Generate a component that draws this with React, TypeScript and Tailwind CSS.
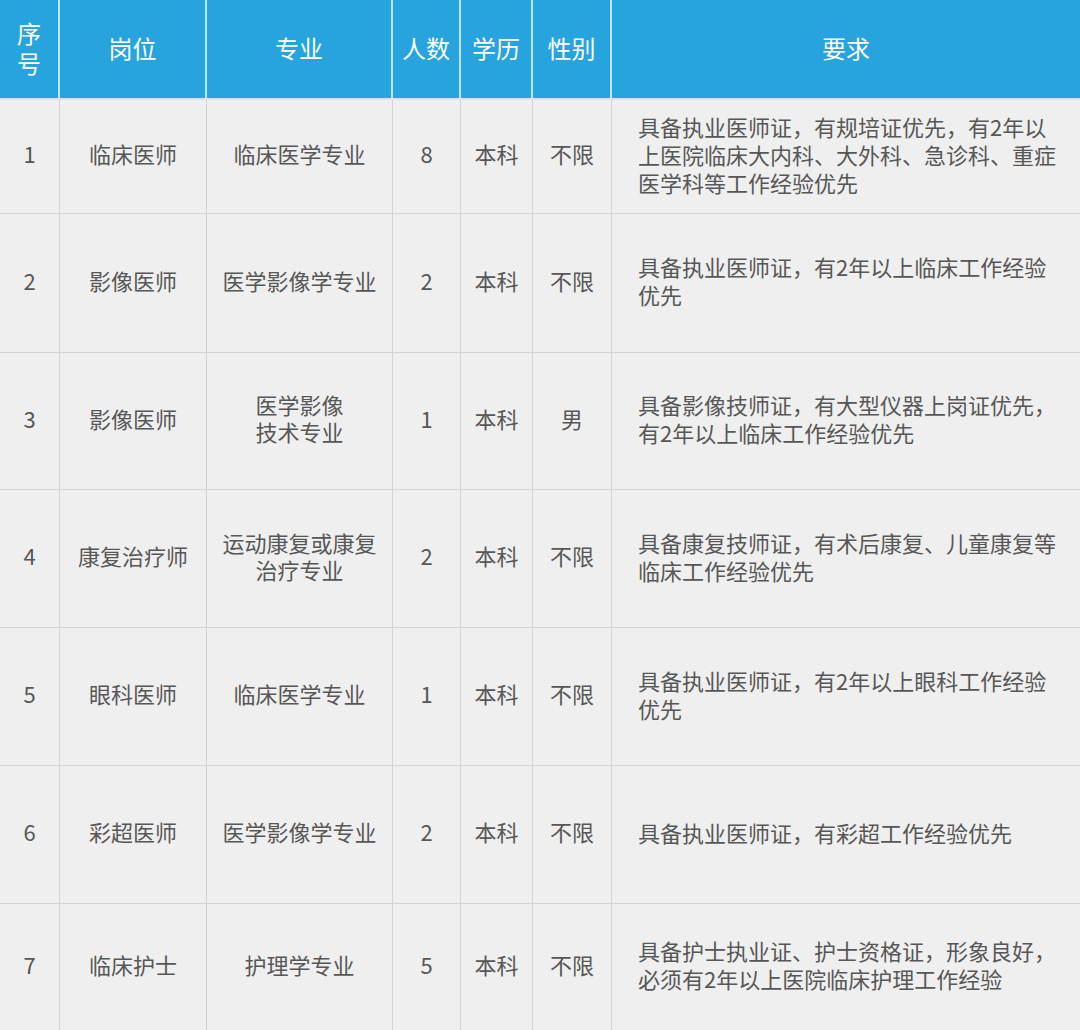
import React from "react";

const colW = [
  "w-[60px]",
  "w-[147px]",
  "w-[186px]",
  "w-[68px]",
  "w-[72px]",
  "w-[79px]",
  "w-[468px]",
];

const rows: { h: string; cells: React.ReactNode[]; req: React.ReactNode }[] = [
  {
    h: "h-[114px] border-b",
    cells: ["1", "临床医师", "临床医学专业", "8", "本科", "不限"],
    req: (
      <>
        具备执业医师证，有规培证优先，有2年以
        <br />
        上医院临床大内科、大外科、急诊科、重症
        <br />
        医学科等工作经验优先
      </>
    ),
  },
  {
    h: "h-[139px] border-b",
    cells: ["2", "影像医师", "医学影像学专业", "2", "本科", "不限"],
    req: (
      <>
        具备执业医师证，有2年以上临床工作经验
        <br />
        优先
      </>
    ),
  },
  {
    h: "h-[137px] border-b",
    cells: [
      "3",
      "影像医师",
      <>
        医学影像
        <br />
        技术专业
      </>,
      "1",
      "本科",
      "男",
    ],
    req: (
      <>
        具备影像技师证，有大型仪器上岗证优先，
        <br />
        有2年以上临床工作经验优先
      </>
    ),
  },
  {
    h: "h-[138px] border-b",
    cells: [
      "4",
      "康复治疗师",
      <>
        运动康复或康复
        <br />
        治疗专业
      </>,
      "2",
      "本科",
      "不限",
    ],
    req: (
      <>
        具备康复技师证，有术后康复、儿童康复等
        <br />
        临床工作经验优先
      </>
    ),
  },
  {
    h: "h-[138px] border-b",
    cells: ["5", "眼科医师", "临床医学专业", "1", "本科", "不限"],
    req: (
      <>
        具备执业医师证，有2年以上眼科工作经验
        <br />
        优先
      </>
    ),
  },
  {
    h: "h-[138px] border-b",
    cells: ["6", "彩超医师", "医学影像学专业", "2", "本科", "不限"],
    req: <>具备执业医师证，有彩超工作经验优先</>,
  },
  {
    h: "h-[126px]",
    cells: ["7", "临床护士", "护理学专业", "5", "本科", "不限"],
    req: (
      <>
        具备护士执业证、护士资格证，形象良好，
        <br />
        必须有2年以上医院临床护理工作经验
      </>
    ),
  },
];

const headers: React.ReactNode[] = [
  <>
    序
    <br />号
  </>,
  "岗位",
  "专业",
  "人数",
  "学历",
  "性别",
  "要求",
];

export default function App() {
  return (
    <div className="w-[1080px] h-[1030px] overflow-hidden bg-[#efefef] font-['Noto_Sans_CJK_SC','Noto_Sans',sans-serif]">
      <div className="flex h-[100px] bg-[#27a3de] border-b-2 border-[#c9e9f7]">
        {headers.map((h, i) => (
          <div
            key={i}
            className={`${colW[i]} flex items-center justify-center text-white text-[24px] leading-[30px] text-center ${
              i < 6 ? "border-r-2 border-[#bde5f6]" : ""
            }`}
          >
            <div className="-mt-[2px]">{h}</div>
          </div>
        ))}
      </div>
      {rows.map((r, ri) => (
        <div key={ri} className={`${r.h} flex border-[#d3d3d3]`}>
          {r.cells.map((c, i) => (
            <div
              key={i}
              className={`${colW[i]} flex items-center justify-center text-center text-[#575757] text-[22px] leading-[27px] border-r border-[#d3d3d3]`}
            >
              <div className="-mt-[6px]">{c}</div>
            </div>
          ))}
          <div className="w-[468px] flex items-center pl-[26px] text-[#575757] text-[22px] leading-[28px] whitespace-nowrap">
            <div className="-mt-[6px]">{r.req}</div>
          </div>
        </div>
      ))}
    </div>
  );
}
